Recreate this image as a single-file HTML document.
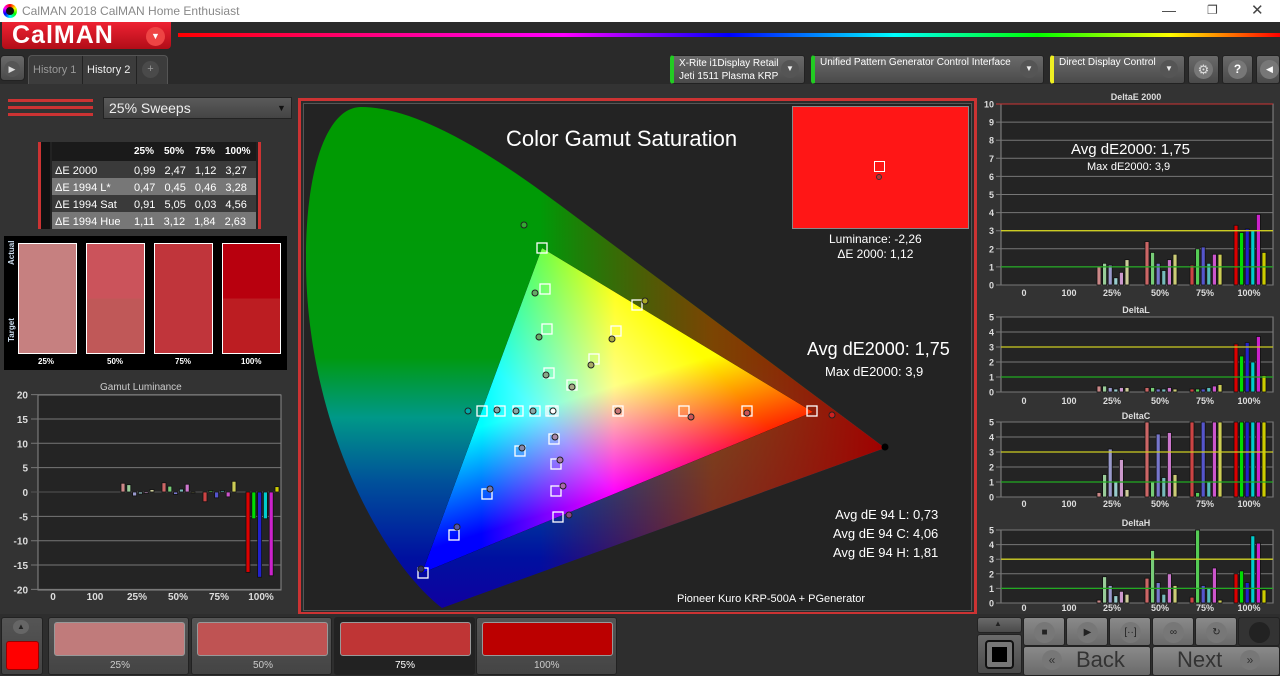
<!DOCTYPE html>
<html><head><meta charset="utf-8">
<style>
*{margin:0;padding:0;box-sizing:border-box}
body{width:1280px;height:676px;overflow:hidden;background:#333;font-family:"Liberation Sans",sans-serif;color:#ddd;position:relative}
.a{position:absolute}
.btn{background:linear-gradient(#6a6a6a,#4a4a4a);border:1px solid #222;border-radius:3px}
.t{font-size:11px;color:#eee}
</style></head><body>
<!-- title bar -->
<div class="a" style="left:0;top:0;width:1280px;height:22px;background:#fff"></div>
<div class="a" style="left:3px;top:4px;width:14px;height:14px;border-radius:50%;background:conic-gradient(red,yellow,lime,cyan,blue,magenta,red)"><div style="margin:3px;width:8px;height:8px;border-radius:50%;background:#111"></div></div>
<div class="a" style="left:22px;top:4px;font-size:12px;color:#888">CalMAN 2018 CalMAN Home Enthusiast</div>
<div class="a" style="left:1162px;top:2px;font-size:14px;color:#444">—</div>
<div class="a" style="left:1207px;top:3px;font-size:12px;color:#444">❐</div>
<div class="a" style="left:1251px;top:1px;font-size:15px;color:#444">✕</div>
<!-- header -->
<div class="a" style="left:0;top:22px;width:1280px;height:62px;background:#2a2a2a"></div>
<div class="a" style="left:2px;top:22px;width:169px;height:27px;background:linear-gradient(#e23,#b10d18);border-radius:0 0 4px 4px;color:#fff;font-weight:bold;font-size:25px;line-height:27px;padding-left:10px;letter-spacing:1px">CalMAN</div>
<div class="a" style="left:146px;top:27px;width:19px;height:19px;border-radius:50%;background:#e44;color:#fff;font-size:9px;text-align:center;line-height:19px">▼</div>
<div class="a" style="left:178px;top:33px;width:1102px;height:4px;background:linear-gradient(90deg,#f00,#f0f 35%,#00f 50%,#0ff 65%,#0f0 78%,#ff0 90%,#f00)"></div>
<div class="a btn" style="left:0;top:55px;width:25px;height:26px;border-radius:4px"><div style="margin:5px 3px;width:16px;height:16px;border-radius:50%;background:#555;color:#ddd;font-size:9px;text-align:center;line-height:16px">▶</div></div>
<div class="a" style="left:28px;top:55px;width:140px;height:29px;background:#3c3c3c;border:1px solid #555;border-bottom:none;border-radius:4px 4px 0 0"></div>
<div class="a t" style="left:33px;top:64px;color:#999">History 1</div>
<div class="a" style="left:82px;top:56px;width:55px;height:28px;border-left:1px solid #222;border-right:1px solid #222"></div>
<div class="a t" style="left:87px;top:64px;color:#eee">History 2</div>
<div class="a" style="left:142px;top:61px;width:17px;height:17px;border-radius:50%;background:#4a4a4a;color:#999;font-size:11px;text-align:center;line-height:17px">+</div>
<!-- device selectors -->
<div class="a btn" style="left:670px;top:55px;width:135px;height:29px;border-left:4px solid #2c2"></div>
<div class="a" style="left:679px;top:57px;font-size:10px;color:#fff;line-height:13px">X-Rite i1Display Retail<br>Jeti 1511 Plasma KRP</div>
<div class="a btn" style="left:811px;top:55px;width:233px;height:29px;border-left:4px solid #2c2"></div>
<div class="a" style="left:820px;top:57px;font-size:10px;color:#fff">Unified Pattern Generator Control Interface</div>
<div class="a btn" style="left:1050px;top:55px;width:135px;height:29px;border-left:4px solid #ee2"></div>
<div class="a" style="left:1059px;top:57px;font-size:10px;color:#fff">Direct Display Control</div>
<div class="a" style="left:781px;top:60px;width:18px;height:18px;border-radius:50%;background:#555;color:#eee;font-size:8px;text-align:center;line-height:18px">▼</div>
<div class="a" style="left:1020px;top:60px;width:18px;height:18px;border-radius:50%;background:#555;color:#eee;font-size:8px;text-align:center;line-height:18px">▼</div>
<div class="a" style="left:1160px;top:60px;width:18px;height:18px;border-radius:50%;background:#555;color:#eee;font-size:8px;text-align:center;line-height:18px">▼</div>
<div class="a btn" style="left:1188px;top:55px;width:31px;height:29px"><div style="margin:4px 5px;width:19px;height:19px;border-radius:50%;background:#777;color:#ddd;font-size:13px;text-align:center;line-height:19px">⚙</div></div>
<div class="a btn" style="left:1222px;top:55px;width:31px;height:29px"><div style="margin:4px 5px;width:19px;height:19px;border-radius:50%;background:#777;color:#fff;font-size:12px;font-weight:bold;text-align:center;line-height:19px">?</div></div>
<div class="a btn" style="left:1256px;top:55px;width:24px;height:29px"><div style="margin:4px 3px;width:19px;height:19px;border-radius:50%;background:#777;color:#fff;font-size:9px;text-align:center;line-height:19px">◀</div></div>
<!-- left panel -->
<div class="a" style="left:8px;top:99px;width:85px;height:3px;background:#c33"></div>
<div class="a" style="left:8px;top:106px;width:85px;height:3px;background:#c33"></div>
<div class="a" style="left:8px;top:113px;width:85px;height:3px;background:#c33"></div>
<div class="a" style="left:103px;top:97px;width:189px;height:22px;background:linear-gradient(#5a5a5a,#444);border:1px solid #222"></div>
<div class="a" style="left:109px;top:100px;font-size:14px;color:#eee">25% Sweeps</div>
<div class="a" style="left:277px;top:103px;font-size:9px;color:#111">▼</div>
<div class="a" style="left:38px;top:142px;width:223px;height:87px;background:#222;border-left:3px solid #c33;border-right:3px solid #c33"></div>
<div class="a" style="left:41px;top:142px;width:9px;height:87px;background:#111"></div>
<div class="a" style="left:52px;top:161px;width:204px;height:17px;background:#3a3a3a"></div>
<div class="a" style="left:52px;top:178px;width:204px;height:17px;background:#777"></div>
<div class="a" style="left:52px;top:195px;width:204px;height:17px;background:#3a3a3a"></div>
<div class="a" style="left:52px;top:212px;width:204px;height:17px;background:#777"></div>
<div class="a" style="left:52px;top:142px;width:204px;height:19px;background:#1a1a1a"></div>
<div class="a" style="left:134px;top:146px;font-size:10px;font-weight:bold;color:#fff">25%</div>
<div class="a" style="left:164px;top:146px;font-size:10px;font-weight:bold;color:#fff">50%</div>
<div class="a" style="left:195px;top:146px;font-size:10px;font-weight:bold;color:#fff">75%</div>
<div class="a" style="left:225px;top:146px;font-size:10px;font-weight:bold;color:#fff">100%</div>
<div class="a" style="left:55px;top:163px;font-size:11px;color:#fff;line-height:17px">ΔE 2000<br>ΔE 1994 L*<br>ΔE 1994 Sat<br>ΔE 1994 Hue</div>
<div class="a" style="left:134px;top:163px;font-size:11px;color:#fff;line-height:17px;word-spacing:6px">0,99 2,47 1,12 3,27<br>0,47 0,45 0,46 3,28<br>0,91 5,05 0,03 4,56<br>1,11 3,12 1,84 2,63</div>
<!-- swatch compare -->
<div class="a" style="left:4px;top:236px;width:283px;height:134px;background:#000"></div>
<div class="a" style="left:7px;top:265px;font-size:8px;font-weight:bold;color:#cde;transform:rotate(-90deg);transform-origin:left top">Actual</div>
<div class="a" style="left:7px;top:342px;font-size:8px;font-weight:bold;color:#cde;transform:rotate(-90deg);transform-origin:left top">Target</div>
<div class="a" style="left:18px;top:243px;width:59px;height:111px;border:1px solid #fff;background:#c68080"></div>
<div class="a" style="left:86px;top:243px;width:59px;height:111px;border:1px solid #fff;background:linear-gradient(#cb535b 50%,#c05858 50%)"></div>
<div class="a" style="left:154px;top:243px;width:59px;height:111px;border:1px solid #fff;background:#c0353b"></div>
<div class="a" style="left:222px;top:243px;width:59px;height:111px;border:1px solid #fff;background:linear-gradient(#b8000e 50%,#bc1d22 50%)"></div>
<div class="a" style="top:357px;font-size:8px;font-weight:bold;color:#fff;left:38px">25%</div>
<div class="a" style="top:357px;font-size:8px;font-weight:bold;color:#fff;left:107px">50%</div>
<div class="a" style="top:357px;font-size:8px;font-weight:bold;color:#fff;left:175px">75%</div>
<div class="a" style="top:357px;font-size:8px;font-weight:bold;color:#fff;left:241px">100%</div>
<div class="a" style="left:100px;top:382px;font-size:10px;color:#ccc">Gamut Luminance</div>
<svg class="a" style="left:0;top:380px" width="300" height="230" id="gl"></svg>
<!-- main chart -->
<div class="a" style="left:298px;top:98px;width:679px;height:517px;border:3px solid #c33;background:#2b2b2b"></div>
<div class="a" style="left:303px;top:103px;width:669px;height:508px;border:1px solid #555;background:#232323"></div>
<svg class="a" style="left:0;top:0" width="1280" height="676">
<defs>
<linearGradient id="hs" x1="0" y1="107" x2="0" y2="608" gradientUnits="userSpaceOnUse">
<stop offset="0" stop-color="#009a00"/><stop offset=".5" stop-color="#009a10"/><stop offset=".62" stop-color="#009888"/><stop offset=".75" stop-color="#00509a"/><stop offset=".9" stop-color="#0010a0"/><stop offset="1" stop-color="#1000a0"/></linearGradient>
<linearGradient id="hr" x1="540" y1="0" x2="885" y2="0" gradientUnits="userSpaceOnUse">
<stop offset="0" stop-color="#a00000" stop-opacity="0"/><stop offset=".5" stop-color="#9a3000" stop-opacity=".8"/><stop offset="1" stop-color="#a00000"/></linearGradient>
<linearGradient id="gg" x1="542" y1="248" x2="617" y2="492" gradientUnits="userSpaceOnUse"><stop offset="0" stop-color="#0f0"/><stop offset=".6" stop-color="#0f0"/><stop offset="1" stop-color="#000"/></linearGradient>
<linearGradient id="rg" x1="813" y1="412" x2="482" y2="410" gradientUnits="userSpaceOnUse"><stop offset="0" stop-color="#f00"/><stop offset=".6" stop-color="#f00"/><stop offset="1" stop-color="#000"/></linearGradient>
<linearGradient id="bg" x1="422" y1="573" x2="677" y2="330" gradientUnits="userSpaceOnUse"><stop offset="0" stop-color="#00f"/><stop offset=".55" stop-color="#00f"/><stop offset="1" stop-color="#000"/></linearGradient>
</defs>
<path d="M442,608 C380,560 306,420 306,260 C306,160 330,107 361,107 C420,107 500,160 560,205 L885,448 Z" fill="url(#hs)"/>
<path d="M442,608 C380,560 306,420 306,260 C306,160 330,107 361,107 C420,107 500,160 560,205 L885,448 Z" fill="url(#hr)"/>
<g style="isolation:isolate">
<polygon points="542,248 813,412 422,573" fill="#000"/>
<polygon points="542,248 813,412 422,573" fill="url(#gg)" style="mix-blend-mode:screen"/>
<polygon points="542,248 813,412 422,573" fill="url(#rg)" style="mix-blend-mode:screen"/>
<polygon points="542,248 813,412 422,573" fill="url(#bg)" style="mix-blend-mode:screen"/>
</g>
<g fill="none" stroke="#fff" stroke-width="1.3" id="sq"></g>
<g stroke="#222" stroke-width="1" fill="#888" id="dots"></g>
<circle cx="885" cy="447" r="3.5" fill="#000"/>
</svg>
<div class="a" style="left:506px;top:126px;font-size:22px;color:#fff">Color Gamut Saturation</div>
<div class="a" style="left:792px;top:106px;width:177px;height:123px;background:#ff1616;border:1px solid #888"></div>
<div class="a" style="left:874px;top:161px;width:11px;height:11px;border:1.3px solid #fff"></div>
<div class="a" style="left:876px;top:174px;width:6px;height:6px;border-radius:50%;background:#b33;border:1px solid #333"></div>
<div class="a" style="left:829px;top:232px;font-size:12px;color:#fff;text-align:center;line-height:15px">Luminance: -2,26<br>ΔE 2000: 1,12</div>
<div class="a" style="left:807px;top:339px;font-size:18px;color:#fff">Avg dE2000: 1,75</div>
<div class="a" style="left:825px;top:364px;font-size:13px;color:#fff">Max dE2000: 3,9</div>
<div class="a" style="left:833px;top:505px;font-size:13px;color:#fff;line-height:19px;text-align:right">Avg dE 94 L: 0,73<br>Avg dE 94 C: 4,06<br>Avg dE 94 H: 1,81</div>
<div class="a" style="left:677px;top:593px;font-size:11px;color:#fff">Pioneer Kuro KRP-500A + PGenerator</div>
<!-- right charts -->
<svg class="a" style="left:976px;top:86px" width="304" height="530" id="rc"></svg>
<div class="a" style="left:1071px;top:141px;font-size:15px;color:#fff">Avg dE2000: 1,75</div>
<div class="a" style="left:1087px;top:161px;font-size:11px;color:#fff">Max dE2000: 3,9</div>
<!-- bottom -->
<div class="a" style="left:0;top:614px;width:1280px;height:62px;background:#2e2e2e"></div>
<div class="a btn" style="left:1px;top:617px;width:42px;height:58px;background:linear-gradient(#555,#444)"></div>
<div class="a" style="left:13px;top:620px;width:16px;height:14px;border-radius:50%;background:#666;color:#222;font-size:8px;text-align:center;line-height:14px">▲</div>
<div class="a" style="left:6px;top:641px;width:33px;height:29px;background:#f00;border:1px solid #900;border-radius:3px"></div>
<div class="a btn" style="left:48px;top:617px;width:141px;height:58px;background:linear-gradient(#555,#444)"></div>
<div class="a" style="left:54px;top:622px;width:131px;height:34px;background:#c07b7b;border:1px solid #999;border-radius:3px"></div>
<div class="a" style="left:110px;top:660px;font-size:10px;color:#ccc">25%</div>
<div class="a btn" style="left:191px;top:617px;width:141px;height:58px;background:linear-gradient(#555,#444)"></div>
<div class="a" style="left:197px;top:622px;width:131px;height:34px;background:#bf5353;border:1px solid #999;border-radius:3px"></div>
<div class="a" style="left:253px;top:660px;font-size:10px;color:#ccc">50%</div>
<div class="a" style="left:334px;top:617px;width:141px;height:58px;background:#222;border-radius:3px"></div>
<div class="a" style="left:340px;top:622px;width:131px;height:34px;background:#bf3535;border:1px solid #999;border-radius:3px"></div>
<div class="a" style="left:395px;top:660px;font-size:10px;color:#fff">75%</div>
<div class="a btn" style="left:476px;top:617px;width:141px;height:58px;background:linear-gradient(#555,#444)"></div>
<div class="a" style="left:482px;top:622px;width:131px;height:34px;background:#bb0000;border:1px solid #999;border-radius:3px"></div>
<div class="a" style="left:534px;top:660px;font-size:10px;color:#ccc">100%</div>
<div class="a btn" style="left:977px;top:617px;width:45px;height:16px"></div>
<div class="a" style="left:994px;top:619px;font-size:8px;color:#222">▲</div>
<div class="a btn" style="left:977px;top:634px;width:45px;height:40px"></div>
<div class="a" style="left:985px;top:640px;width:29px;height:29px;border:2px solid #111;border-radius:4px;background:#777"><div style="margin:5px;width:15px;height:15px;background:#000"></div></div>
<div id="pb"></div>
<div class="a btn" style="left:1023px;top:646px;width:128px;height:30px;background:linear-gradient(#8a8a8a,#6a6a6a)"></div>
<div class="a btn" style="left:1152px;top:646px;width:128px;height:30px;background:linear-gradient(#8a8a8a,#6a6a6a)"></div>
<div class="a" style="left:1042px;top:650px;width:20px;height:20px;border-radius:50%;background:#777;color:#333;font-size:12px;text-align:center;line-height:20px">«</div>
<div class="a" style="left:1076px;top:647px;font-size:22px;color:#333">Back</div>
<div class="a" style="left:1177px;top:647px;font-size:22px;color:#333">Next</div>
<div class="a" style="left:1240px;top:650px;width:20px;height:20px;border-radius:50%;background:#777;color:#333;font-size:12px;text-align:center;line-height:20px">»</div>
<script>
var NS='http://www.w3.org/2000/svg';
function el(p,t,a,txt){var e=document.createElementNS(NS,t);for(var k in a)e.setAttribute(k,a[k]);if(txt)e.textContent=txt;p.appendChild(e);return e}
var pb=document.getElementById('pb');var icons=['■','▶','[··]','∞','↻',''];
for(var i=0;i<6;i++){var d=document.createElement('div');d.className='a btn';d.style.cssText='left:'+(1023+i*43)+'px;top:617px;width:42px;height:29px;background:'+(i==5?'#333':'linear-gradient(#8a8a8a,#6a6a6a)');
d.innerHTML='<div style="margin:4px 10px;width:21px;height:21px;border-radius:50%;background:'+(i==5?'#222':'#777')+';color:#222;font-size:10px;text-align:center;line-height:21px">'+icons[i]+'</div>';pb.appendChild(d);}
var sq=[[542,248],[545,289],[547,329],[549,373],[551,411],[594,359],[616,331],[637,305],[572,385],[482,411],[500,411],[518,411],[535,411],[553,411],[618,411],[684,411],[747,411],[812,411],[554,439],[520,451],[556,464],[487,494],[556,491],[454,535],[558,517],[423,573]];
var g=document.getElementById('sq');sq.forEach(function(p){el(g,'rect',{x:p[0]-5,y:p[1]-5,width:10,height:10})});
var dt=[[524,225,'#3a3'],[535,293,'#6a6'],[539,337,'#6a6'],[546,375,'#8a8'],[572,387,'#aa8'],[591,365,'#aa6'],[612,339,'#aa4'],[645,301,'#aa2'],[468,411,'#0aa'],[497,410,'#8aa'],[516,411,'#8aa'],[533,411,'#8aa'],[553,411,'#fff'],[618,411,'#c77'],[691,417,'#c55'],[747,413,'#c55'],[832,415,'#c22'],[555,437,'#a8a'],[522,448,'#88a'],[560,460,'#a7a'],[490,489,'#77a'],[563,486,'#a6a'],[457,527,'#55a'],[569,515,'#848'],[421,569,'#336']];
var d2=document.getElementById('dots');dt.forEach(function(p){el(d2,'circle',{cx:p[0],cy:p[1],r:3,fill:p[2]})});
var gl=document.getElementById('gl');
el(gl,'rect',{x:38,y:15,width:243,height:195,fill:'#242424',stroke:'#888'});
for(var v=20;v>=-20;v-=5){var y=112-v*4.87;el(gl,'line',{x1:31,x2:281,y1:y,y2:y,stroke:v==0?'#555':'#777'});el(gl,'text',{x:28,y:y+4,'font-size':10,fill:'#ddd','text-anchor':'end','font-weight':'bold','font-family':'Liberation Sans'},String(v));}
var labs=['0','100','25%','50%','75%','100%'],lx=[53,95,137,178,219,261];
labs.forEach(function(l,i){el(gl,'text',{x:lx[i],y:220,'font-size':10,fill:'#ddd','text-anchor':'middle','font-weight':'bold','font-family':'Liberation Sans'},l)});
var cols=[['#c88','#9c9','#99c','#9cc','#c9c','#cc9'],['#c66','#7c7','#77c','#7bb','#c7c','#cc7'],['#c44','#5c5','#55c','#5bb','#c5c','#cc5'],['#d00','#0d0','#22c','#0cc','#c2c','#cc0']];
var glv=[[1.8,1.5,-.8,-.4,-.3,.5],[1.9,1.2,-.5,.6,1.6,0],[-2,.3,-1.2,.3,-1,2.2],[-16.5,-5.5,-17.5,-5.5,-17.2,1.1]];
var gx=[121,162,203,246];
glv.forEach(function(gv,gi){gv.forEach(function(v,j){var x=gx[gi]+j*5.8,y0=112,h=v*4.87;el(gl,'rect',{x:x,y:h>0?y0-h:y0,width:4,height:Math.max(Math.abs(h),1),fill:cols[gi][j],stroke:'#111','stroke-width':.8})})});
var rc=document.getElementById('rc');
var charts=[{t:'DeltaE 2000',ty:14,y0:18,y1:199,max:10,lab:210,v:[[1,1.2,1.1,.4,.7,1.4],[2.4,1.8,1.2,.8,1.4,1.7],[1.1,2,2.1,1.2,1.7,1.7],[3.3,2.9,3.1,3,3.9,1.8]]},
{t:'DeltaL',ty:227,y0:231,y1:306,max:5,lab:318,v:[[.4,.4,.3,.2,.3,.3],[.3,.3,.2,.2,.3,.2],[.2,.2,.2,.3,.4,.5],[3.2,2.4,3.3,2,3.7,1.1]]},
{t:'DeltaC',ty:333,y0:336,y1:411,max:5,lab:421,v:[[.3,1.5,3.2,1,2.5,.5],[5,1,4.2,1.3,4.3,1.5],[5,.3,5,1,5,5],[5,5,5,5,5,5]]},
{t:'DeltaH',ty:440,y0:444,y1:517,max:5,lab:525,v:[[.2,1.8,1.2,.5,.8,.6],[1.7,3.6,1.4,.6,2,1.2],[.4,5,1.2,1,2.4,.2],[2,2.2,1.4,4.6,4.1,.9]]}];
var rx=[48,93,136,184,229,273];
charts.forEach(function(c){
el(rc,'text',{x:160,y:c.ty,'font-size':9,fill:'#ddd','text-anchor':'middle','font-weight':'bold','font-family':'Liberation Sans'},c.t);
el(rc,'rect',{x:25,y:c.y0,width:272,height:c.y1-c.y0,fill:'#242424',stroke:'#888'});
var s=(c.y1-c.y0)/c.max;
for(var v=0;v<=c.max;v++){var y=c.y1-v*s;el(rc,'line',{x1:20,x2:297,y1:y,y2:y,stroke:v==c.max&&c.max==10?'#c33':'#777'});el(rc,'text',{x:18,y:y+3.5,'font-size':9,fill:'#ddd','text-anchor':'end','font-weight':'bold','font-family':'Liberation Sans'},String(v));}
c.v.forEach(function(gv,gi){gv.forEach(function(v,j){var x=rx[gi+2]-15+j*5.6,h=v*s;el(rc,'rect',{x:x,y:c.y1-h,width:4,height:h,fill:cols[gi][j],stroke:'#111','stroke-width':.8})})});
el(rc,'line',{x1:25,x2:297,y1:c.y1-3*s,y2:c.y1-3*s,stroke:'#cc2','stroke-width':1.3});
el(rc,'line',{x1:25,x2:297,y1:c.y1-1*s,y2:c.y1-1*s,stroke:'#2a2','stroke-width':1.3});
labs.forEach(function(l,i){el(rc,'text',{x:rx[i],y:c.lab,'font-size':9,fill:'#ddd','text-anchor':'middle','font-weight':'bold','font-family':'Liberation Sans'},l)});
});
</script>
</body></html>
